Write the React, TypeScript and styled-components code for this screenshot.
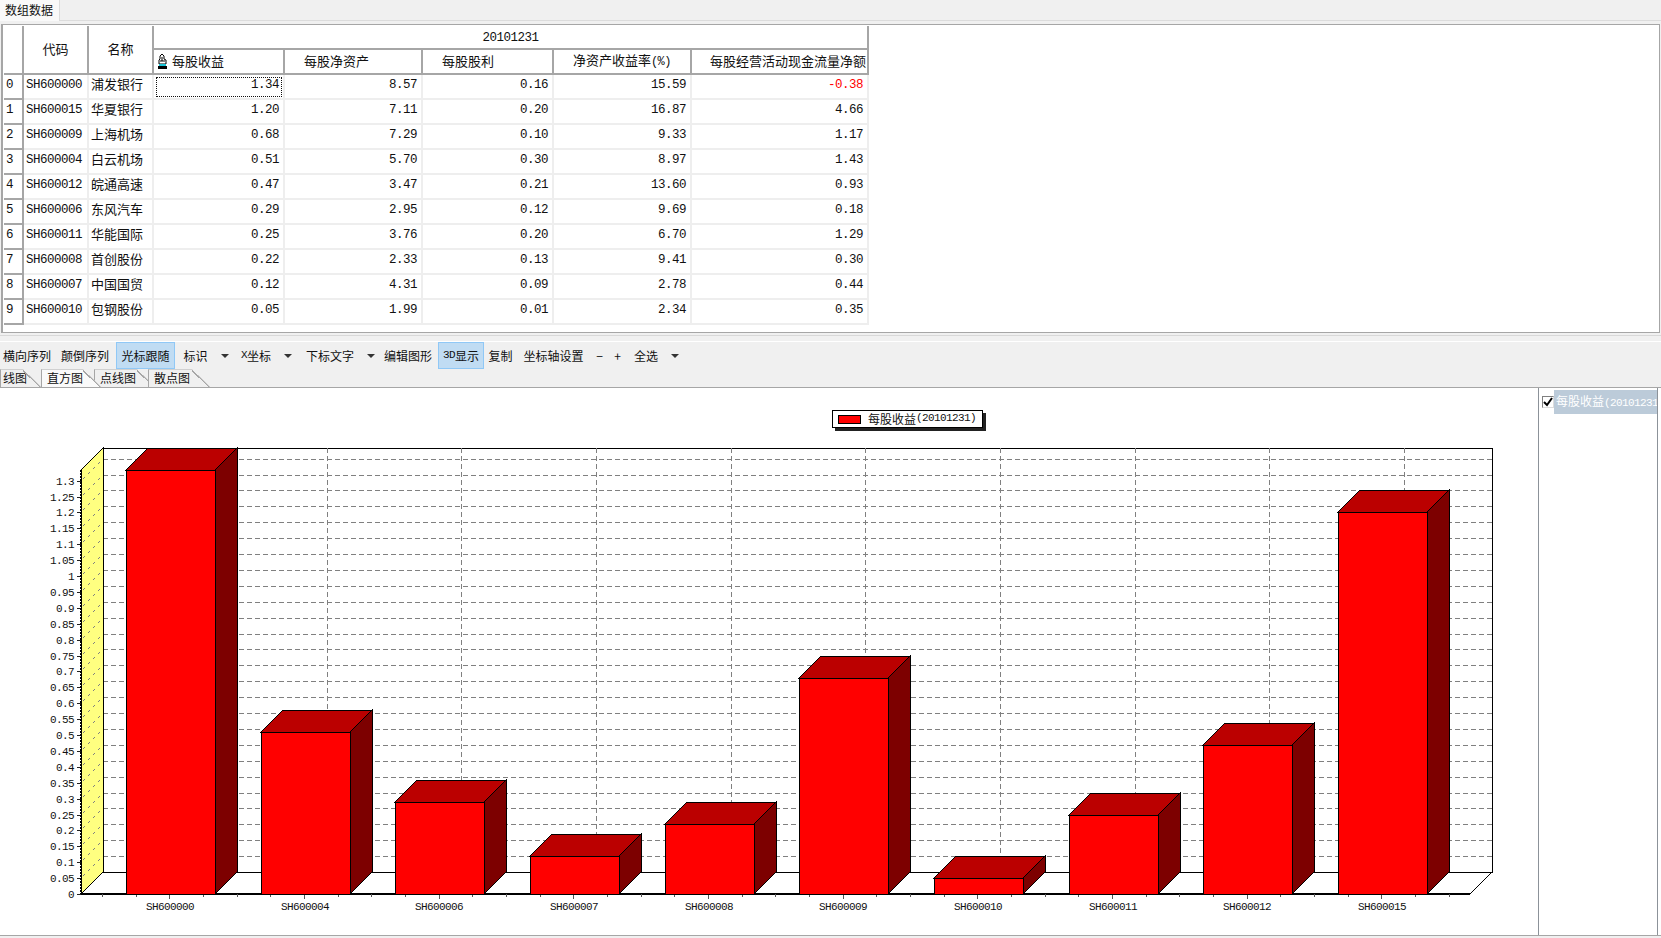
import React from 'react';
import styled, { createGlobalStyle } from 'styled-components';

const MONO = '"Liberation Mono", "Noto Sans CJK SC", monospace';
const CJK = '"Noto Sans CJK SC", "Liberation Sans", sans-serif';

const GlobalStyle = createGlobalStyle`
  html, body {
    margin: 0;
    padding: 0;
    background: #f0f0f0;
    overflow: hidden;
  }
`;

const Page = styled.div`
  width: 1661px;
  height: 938px;
  display: flex;
  flex-direction: column;
  font-family: ${CJK};
  color: #111;
  background: #f0f0f0;
`;

const TopStrip = styled.div`
  height: 20px;
  flex: none;
  border-bottom: 1px solid #dcdcdc;
  display: flex;
`;

const TopTab = styled.div`
  width: 60px;
  height: 21px;
  background: #f9f9f9;
  border-right: 1px solid #dcdcdc;
  font-size: 12px;
  line-height: 20px;
  padding-left: 5px;
  box-sizing: border-box;
`;

const GridPanel = styled.div`
  margin: 3px 1px 0 1px;
  height: 309px;
  flex: none;
  box-sizing: border-box;
  background: #fff;
  border: 1px solid #a6a6a6;
  border-left-width: 2px;
  padding: 1px 0 0 1px;
`;

const Table = styled.table`
  border-collapse: separate;
  border-spacing: 0;
  table-layout: fixed;
  width: 865px;
`;

const Head = styled.th<{ $h?: number; $pad?: number }>`
  height: ${(p) => p.$h ?? 24}px;
  box-sizing: border-box;
  padding: 0 0 2px ${(p) => p.$pad ?? 0}px;
  font-size: 13px;
  line-height: 16px;
  font-weight: 400;
  text-align: ${(p) => (p.$pad !== undefined ? 'left' : 'center')};
  border-right: 2px solid #a6a6a6;
  border-bottom: 2px solid #a6a6a6;
  white-space: nowrap;
  overflow: hidden;
`;

const DateHead = styled(Head)`
  font-family: ${MONO};
  font-size: 12.5px;
  letter-spacing: -0.5px;
  padding: 1px 0 0 0;
`;

const HandIcon = styled.svg`
  width: 11px;
  height: 15px;
  margin-right: 4px;
  vertical-align: -3px;
`;

const Latin = styled.span`
  font-family: ${MONO};
  font-size: 12px;
  letter-spacing: -0.6px;
`;

const Narrow = styled.span`
  font-family: ${MONO};
  font-size: 11px;
  letter-spacing: -0.6px;
`;

const Cell = styled.td`
  height: 25px;
  box-sizing: border-box;
  padding: 0 0 5px 0;
  border-right: 2px solid #eeeeee;
  border-bottom: 2px solid #eeeeee;
  white-space: nowrap;
  font-size: 13px;
  line-height: 16px;
`;

const IndexCell = styled(Cell)`
  font-family: ${MONO};
  font-size: 12.5px;
  padding: 0 0 3px 2px;
  border-right-color: #a6a6a6;
  border-bottom-color: #a6a6a6;
`;

const CodeCell = styled(Cell)`
  font-family: ${MONO};
  font-size: 12.5px;
  letter-spacing: -0.5px;
  padding: 0 0 3px 2px;
`;

const NameCell = styled(Cell)`
  padding-left: 2px;
`;

const NumCell = styled(Cell)<{ $neg?: boolean; $focus?: boolean }>`
  font-family: ${MONO};
  font-size: 12.5px;
  letter-spacing: -0.5px;
  text-align: right;
  padding: 0 4px 3px 0;
  color: ${(p) => (p.$neg ? '#ff0000' : '#111')};
  position: relative;
  ${(p) =>
    p.$focus &&
    `&::after {
      content: '';
      position: absolute;
      left: 2px;
      right: 1px;
      top: 2px;
      bottom: 1px;
      border: 1px dotted #111;
    }`}
`;

const Splitter = styled.div`
  height: 8px;
  flex: none;
  background: #f0f0f0;
  border-bottom: 1px solid #fff;
  box-shadow: inset 0 2px 0 #f0f0f0, inset 0 3px 0 #d8d8d8;
`;

const Toolbar = styled.div`
  height: 27px;
  flex: none;
  display: flex;
  align-items: stretch;
  font-size: 12px;
`;

const ToolItem = styled.div<{ $w: number; $active?: boolean }>`
  width: ${(p) => p.$w}px;
  flex: none;
  box-sizing: border-box;
  display: flex;
  align-items: center;
  justify-content: center;
  white-space: nowrap;
  padding-bottom: 1px;
  background: ${(p) => (p.$active ? '#c0dcf3' : 'transparent')};
  border: 1px solid ${(p) => (p.$active ? '#90c8f6' : 'transparent')};
`;

const Caret = styled.div<{ $w: number }>`
  width: ${(p) => p.$w}px;
  flex: none;
  display: flex;
  align-items: center;
  justify-content: center;
  &::before {
    content: '';
    border-left: 4px solid transparent;
    border-right: 4px solid transparent;
    border-top: 4px solid #333;
  }
`;

const TabRow = styled.div`
  height: 19px;
  flex: none;
  display: flex;
  align-items: flex-end;
  border-bottom: 1px solid #a6a6a6;
  box-sizing: border-box;
`;

const ChartTab = styled.div<{ $w: number; $active?: boolean; $ml?: number }>`
  position: relative;
  width: ${(p) => p.$w}px;
  height: 18px;
  flex: none;
  margin-left: ${(p) => p.$ml ?? 0}px;
  box-sizing: border-box;
  padding-left: ${(p) => (p.$ml === undefined ? 2 : 5)}px;
  font-size: 12px;
  line-height: 16px;
  white-space: nowrap;
  background: ${(p) => (p.$active ? '#fafafa' : '#f0f0f0')};
  border-left: 1px solid #a6a6a6;
  border-top: 1px solid #d0d0d0;
  clip-path: polygon(0 0, calc(100% - 18px) 0, 100% 100%, 0 100%);
  z-index: ${(p) => (p.$active ? 2 : 1)};
  &::after {
    content: '';
    position: absolute;
    right: 0;
    top: 0;
    width: 18px;
    height: 17px;
    background: linear-gradient(
      to top right,
      transparent calc(50% - 1px),
      #a6a6a6 calc(50% - 1px),
      #a6a6a6 calc(50% + 0.5px),
      transparent calc(50% + 0.5px)
    );
  }
`;

const ChartArea = styled.div`
  height: 547px;
  flex: none;
  display: flex;
  background: #fff;
`;

const Plot = styled.div`
  position: relative;
  flex: 1;
`;

const PlotSvg = styled.svg`
  display: block;
  shape-rendering: crispEdges;
  text {
    font-family: ${MONO};
    font-size: 11px;
    letter-spacing: -0.6px;
    fill: #111;
    shape-rendering: auto;
  }
`;

const Legend = styled.div`
  position: absolute;
  left: 832px;
  top: 22px;
  width: 151px;
  height: 18px;
  box-sizing: border-box;
  background: #fff;
  border: 1px solid #000;
  box-shadow: 3px 3px 0 #222;
  display: flex;
  align-items: center;
  padding: 0 0 2px 5px;
  font-size: 12px;
  white-space: nowrap;
`;

const LegendSwatch = styled.div`
  width: 21px;
  height: 7px;
  background: #ff0000;
  border: 1px solid #000;
  margin: 2px 7px 0 0;
  flex: none;
`;

const SeriesPanel = styled.div`
  width: 120px;
  margin-right: 3px;
  flex: none;
  box-sizing: border-box;
  border-left: 1px solid #8c9299;
  border-right: 1px solid #8c9299;
  padding: 2px 0 0 3px;
  display: flex;
  align-items: flex-start;
  overflow: hidden;
`;

const Check = styled.div`
  width: 12px;
  height: 12px;
  margin-top: 6px;
  flex: none;
  box-sizing: border-box;
  background: #fff;
  border: 1px solid #808080;
  border-right-color: #ddd;
  border-bottom-color: #ddd;
  display: flex;
  align-items: center;
  justify-content: center;
`;

const SeriesLabel = styled.div`
  flex: 1;
  min-width: 0;
  height: 24px;
  background: #bccbd9;
  color: #fff;
  font-size: 12px;
  line-height: 22px;
  padding-left: 2px;
  white-space: nowrap;
  overflow: hidden;
`;

const BottomEdge = styled.div`
  flex: 1;
  border-top: 1px solid #a6a6a6;
`;

const rows = [
  ['SH600000', '浦发银行', '1.34', '8.57', '0.16', '15.59', '-0.38'],
  ['SH600015', '华夏银行', '1.20', '7.11', '0.20', '16.87', '4.66'],
  ['SH600009', '上海机场', '0.68', '7.29', '0.10', '9.33', '1.17'],
  ['SH600004', '白云机场', '0.51', '5.70', '0.30', '8.97', '1.43'],
  ['SH600012', '皖通高速', '0.47', '3.47', '0.21', '13.60', '0.93'],
  ['SH600006', '东风汽车', '0.29', '2.95', '0.12', '9.69', '0.18'],
  ['SH600011', '华能国际', '0.25', '3.76', '0.20', '6.70', '1.29'],
  ['SH600008', '首创股份', '0.22', '2.33', '0.13', '9.41', '0.30'],
  ['SH600007', '中国国贸', '0.12', '4.31', '0.09', '2.78', '0.44'],
  ['SH600010', '包钢股份', '0.05', '1.99', '0.01', '2.34', '0.35'],
];

const colWidths = [20, 65, 65, 131, 138, 131, 138, 177];

const bars: [string, number][] = [
  ['SH600000', 1.34],
  ['SH600004', 0.51],
  ['SH600006', 0.29],
  ['SH600007', 0.12],
  ['SH600008', 0.22],
  ['SH600009', 0.68],
  ['SH600010', 0.05],
  ['SH600011', 0.25],
  ['SH600012', 0.47],
  ['SH600015', 1.2],
];

const X0 = 82;
const XR = 1471;
const Y0 = 895;
const D = 22;
const TOP = 471;
const STEP = 134.67;
const yOf = (v: number) => Math.round(Y0 - v * 318);

const Chart: React.FC = () => {
  const ticks = Array.from({ length: 27 }, (_, i) => i);
  const minor = Array.from({ length: 41 }, (_, i) => i).map((i) => Math.round(103 + i * 33.67));
  return (
    <PlotSvg width={1538} height={547} viewBox="1 389 1538 547">
      <rect x={X0 + D} y={TOP - D} width={XR - X0} height={Y0 - TOP} fill="#fff" stroke="#000" />
      {ticks.slice(1).map((i) => (
        <line
          key={i}
          x1={X0 + D}
          x2={XR + D}
          y1={yOf(i * 0.05) - D}
          y2={yOf(i * 0.05) - D}
          stroke="#808080"
          strokeDasharray="5 3"
        />
      ))}
      {bars.map((_, i) => {
        const x = Math.round(193 + i * STEP);
        return <line key={i} x1={x} x2={x} y1={TOP - D} y2={Y0 - D} stroke="#808080" strokeDasharray="5 3" />;
      })}
      <polygon
        points={`${X0 + D},${Y0 - D} ${XR + D},${Y0 - D} ${XR},${Y0} ${X0},${Y0}`}
        fill="#fff"
        stroke="#000"
      />
      <polygon
        points={`${X0},${TOP} ${X0 + D},${TOP - D} ${X0 + D},${Y0 - D} ${X0},${Y0}`}
        fill="#ffff80"
        stroke="#000"
      />
      {ticks.map((i) => {
        const y = yOf(i * 0.05);
        const label = String(Math.round(i * 5) / 100);
        return (
          <g key={i}>
            {i > 0 && (
              <line x1={X0 + 2} x2={X0 + D} y1={y - 2} y2={y - D} stroke="#808080" strokeDasharray="3 4" />
            )}
            <line x1={X0 - 4} x2={X0} y1={y} y2={y} stroke="#222" />
            <text x={75} y={y + 4} textAnchor="end">
              {label}
            </text>
          </g>
        );
      })}
      <line x1={X0} x2={X0} y1={TOP} y2={Y0} stroke="#000" strokeWidth={2} strokeDasharray="2 1" />
      <line x1={X0} x2={XR} y1={Y0} y2={Y0} stroke="#000" strokeWidth={2} />
      {minor.map((x, i) => (
        <line key={i} x1={x} x2={x} y1={Y0} y2={Y0 + (i % 4 === 2 ? 5 : 3)} stroke="#555" />
      ))}
      {bars.map(([name, v], i) => {
        const l = Math.round(127 + i * STEP);
        const r = l + 89;
        const t = Math.max(yOf(v), TOP);
        return (
          <g key={name}>
            <polygon points={`${l},${t} ${l + D},${t - D} ${r + D},${t - D} ${r},${t}`} fill="#bb0000" stroke="#000" />
            <polygon points={`${r},${t} ${r + D},${t - D} ${r + D},${Y0 - D} ${r},${Y0}`} fill="#7d0000" stroke="#000" />
            <rect x={l} y={t} width={89} height={Y0 - t} fill="#ff0000" stroke="#000" />
            <text x={l + 44} y={911} textAnchor="middle">
              {name}
            </text>
          </g>
        );
      })}
    </PlotSvg>
  );
};

const App: React.FC = () => {
  return (
    <Page>
      <GlobalStyle />
      <TopStrip>
        <TopTab>数组数据</TopTab>
      </TopStrip>
      <GridPanel>
        <Table>
          <colgroup>
            {colWidths.map((w, i) => (
              <col key={i} style={{ width: w }} />
            ))}
          </colgroup>
          <thead>
            <tr>
              <Head rowSpan={2} />
              <Head rowSpan={2}>代码</Head>
              <Head rowSpan={2}>名称</Head>
              <DateHead colSpan={5}>20101231</DateHead>
            </tr>
            <tr>
              <Head $h={25} $pad={3}>
                <HandIcon viewBox="0 0 11 15">
                  <path d="M2 10V6l1-1V2l2-2 2 2v3l2 1v4z" fill="#fff" stroke="#000" />
                  <path d="M5 3v4M3 7h5" stroke="#000" fill="none" />
                  <rect x="2" y="10" width="7" height="2" fill="#19c5d8" />
                  <rect x="1" y="12" width="9" height="3" fill="#000" />
                </HandIcon>
                每股收益
              </Head>
              <Head $h={25} $pad={19}>
                每股净资产
              </Head>
              <Head $h={25} $pad={19}>
                每股股利
              </Head>
              <Head $h={25} $pad={19}>
                净资产收益率<Latin>(%)</Latin>
              </Head>
              <Head $h={25} $pad={18}>
                每股经营活动现金流量净额
              </Head>
            </tr>
          </thead>
          <tbody>
            {rows.map((r, i) => (
              <tr key={r[0]}>
                <IndexCell>{i}</IndexCell>
                <CodeCell>{r[0]}</CodeCell>
                <NameCell>{r[1]}</NameCell>
                {r.slice(2).map((v, j) => (
                  <NumCell key={j} $neg={v.startsWith('-')} $focus={i === 0 && j === 0}>
                    {v}
                  </NumCell>
                ))}
              </tr>
            ))}
          </tbody>
        </Table>
      </GridPanel>
      <Splitter />
      <Toolbar>
        <ToolItem $w={54}>横向序列</ToolItem>
        <ToolItem $w={62}>颠倒序列</ToolItem>
        <ToolItem $w={59} $active>
          光标跟随
        </ToolItem>
        <ToolItem $w={41}>标识</ToolItem>
        <Caret $w={17} />
        <ToolItem $w={46}>
          <Narrow>X</Narrow>坐标
        </ToolItem>
        <Caret $w={17} />
        <ToolItem $w={68}>下标文字</ToolItem>
        <Caret $w={14} />
        <ToolItem $w={60}>编辑图形</ToolItem>
        <ToolItem $w={46} $active>
          <Narrow>3D</Narrow>显示
        </ToolItem>
        <ToolItem $w={33}>复制</ToolItem>
        <ToolItem $w={73}>坐标轴设置</ToolItem>
        <ToolItem $w={19}>−</ToolItem>
        <ToolItem $w={17}>+</ToolItem>
        <ToolItem $w={40}>全选</ToolItem>
        <Caret $w={18} />
      </Toolbar>
      <TabRow>
        <ChartTab $w={41}>线图</ChartTab>
        <ChartTab $w={60} $active $ml={0}>
          直方图
        </ChartTab>
        <ChartTab $w={61} $ml={-7}>
          点线图
        </ChartTab>
        <ChartTab $w={62} $ml={-7}>
          散点图
        </ChartTab>
      </TabRow>
      <ChartArea>
        <Plot>
          <Chart />
          <Legend>
            <LegendSwatch />
            每股收益<Narrow>(20101231)</Narrow>
          </Legend>
        </Plot>
        <SeriesPanel>
          <Check>
            <svg width="10" height="10" viewBox="0 0 10 10">
              <path d="M1 5l3 3 5-7" fill="none" stroke="#000" strokeWidth="2" />
            </svg>
          </Check>
          <SeriesLabel>
            每股收益<Narrow>(20101231)</Narrow>
          </SeriesLabel>
        </SeriesPanel>
      </ChartArea>
      <BottomEdge />
    </Page>
  );
};

export default App;
